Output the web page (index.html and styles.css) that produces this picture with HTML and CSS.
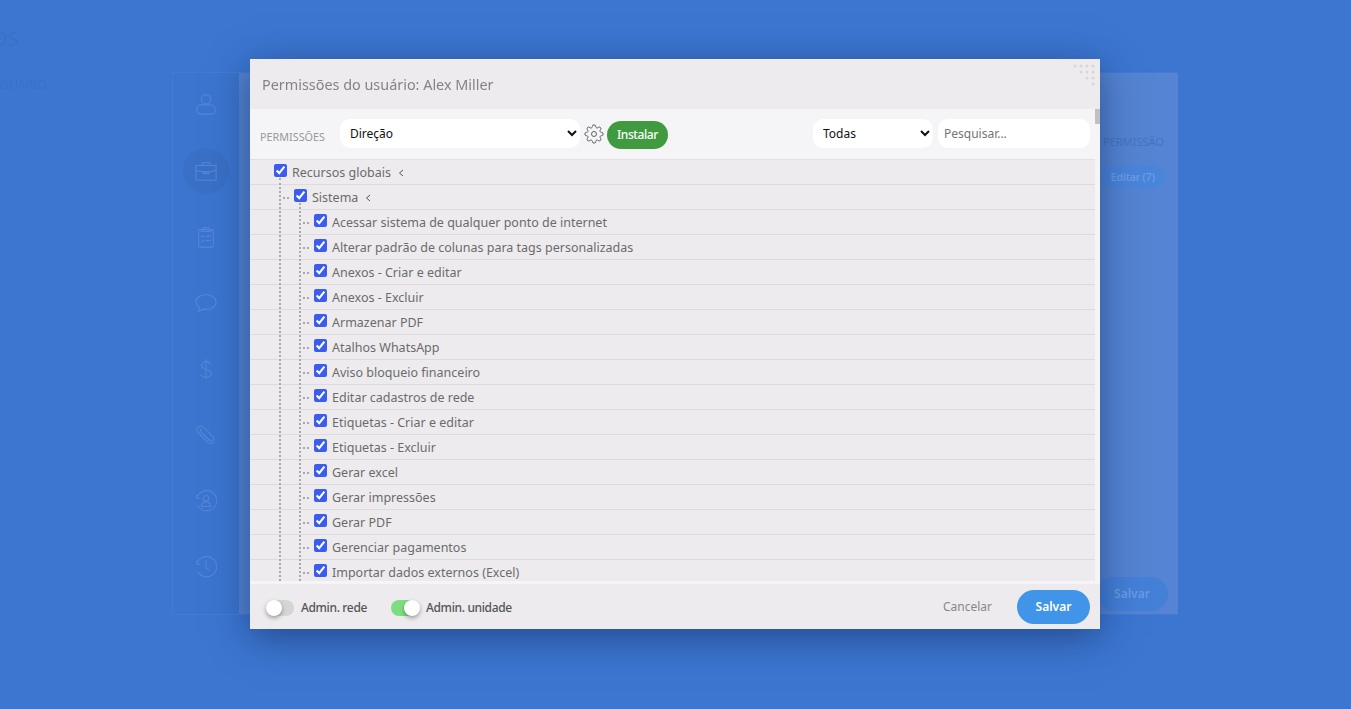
FILE: index.html
```html
<!DOCTYPE html>
<html lang="pt-BR">
<head>
<meta charset="utf-8">
<title>Permissões do usuário</title>
<link rel="stylesheet" href="styles.css">
</head>
<body>
<div class="page">
  <div class="ghost-heading">OS</div>
  <div class="ghost-sub">USUÁRIO</div>
  <main class="card">
    <nav class="side">
      <svg class="nav-icon" viewBox="0 0 24 24"><circle cx="12" cy="7" r="5"/><path d="M6 23a4 4 0 0 1-4-4v-1a5 5 0 0 1 5-5h10a5 5 0 0 1 5 5v1a4 4 0 0 1-4 4z"/></svg>
      <span class="nav-active"><svg class="nav-icon" viewBox="0 0 24 24"><rect x="1" y="6" width="22" height="16"/><path d="M8 6V3h8v3M1 11c5 3 17 3 22 0M9 13h6v2H9z"/></svg></span>
      <svg class="nav-icon" viewBox="0 0 24 24"><rect x="4" y="4" width="16" height="19" rx="1"/><path d="M9 4V2h6v2h2v2H7V4zM7 11l1 1 2-2M12 11h5M7 16l1 1 2-2M12 16h5"/></svg>
      <svg class="nav-icon" viewBox="0 0 24 24"><path d="M12 3c6 0 11 3 11 8s-5 8-11 8c-1 0-2 0-3-.3L4 21l1-4c-2-1.500-4-3.500-4-6 0-5 5-8 11-8z"/></svg>
      <svg class="nav-icon" viewBox="0 0 24 24"><path d="M17 7c-1-2-3-3-5-3-3 0-5 2-5 4 0 6 11 3 11 9 0 2-3 4-6 4s-5-1-6-3M12 1v22"/></svg>
      <svg class="nav-icon" viewBox="0 0 24 24"><path d="M21 20c-2 2-5 2-7 0L3 9C1 7 2 4 4 3c2-1 4-1 6 1l10 10c1 2 1 3 0 4s-3 1-4 0L6 8c-1-1 0-3 2-2"/></svg>
      <svg class="nav-icon" viewBox="0 0 24 24"><path d="M2 9a11 11 0 1 1 1 8M2 5v4h4"/><circle cx="12" cy="9" r="3"/><path d="M7 18c0-3 2-5 5-5s5 2 5 5z"/></svg>
      <svg class="nav-icon" viewBox="0 0 24 24"><path d="M2 9a11 11 0 1 1 1 8M2 5v4h4M12 5v8l4 3"/></svg>
    </nav>
    <section class="content">
      <div class="content-top"></div>
      <div class="content-head">PERMISSÃO</div>
      <div class="content-row"><span class="ghost-pill">Editar (7)</span></div>
      <div class="content-foot"><span class="ghost-save">Salvar</span></div>
    </section>
  </main>
</div>

<div class="overlay">
  <div class="modal">
    <header class="modal-head">
      <h1 class="modal-title">Permissões do usuário: Alex Miller</h1>
      <svg class="grip" viewBox="0 0 22 22"><g><circle cx="2" cy="2" r="1.500"/><circle cx="8" cy="2" r="1.500"/><circle cx="14" cy="2" r="1.500"/><circle cx="20" cy="2" r="1.500"/><circle cx="8" cy="8" r="1.500"/><circle cx="14" cy="8" r="1.500"/><circle cx="20" cy="8" r="1.500"/><circle cx="14" cy="14" r="1.500"/><circle cx="20" cy="14" r="1.500"/><circle cx="20" cy="20" r="1.500"/></g></svg>
    </header>
    <div class="modal-body">
      <div class="pane">
        <div class="toolbar">
          <span class="tool-label">PERMISSÕES</span>
          <select class="field field-role"><option>Direção</option></select>
          <svg class="gear" viewBox="0 0 24 24"><circle cx="12" cy="12" r="3"/><path d="M19.4 15a1.650 1.650 0 0 0 .33 1.820l.06.06a2 2 0 0 1 0 2.830 2 2 0 0 1-2.830 0l-.06-.06a1.650 1.650 0 0 0-1.820-.33 1.650 1.650 0 0 0-1 1.510V21a2 2 0 0 1-2 2 2 2 0 0 1-2-2v-.09A1.650 1.650 0 0 0 9 19.400a1.650 1.650 0 0 0-1.820.33l-.06.06a2 2 0 0 1-2.830 0 2 2 0 0 1 0-2.830l.06-.06a1.650 1.650 0 0 0 .33-1.820 1.650 1.650 0 0 0-1.510-1H3a2 2 0 0 1-2-2 2 2 0 0 1 2-2h.09A1.650 1.650 0 0 0 4.600 9a1.650 1.650 0 0 0-.33-1.820l-.06-.06a2 2 0 0 1 0-2.830 2 2 0 0 1 2.830 0l.06.06a1.650 1.650 0 0 0 1.820.33H9a1.650 1.650 0 0 0 1-1.510V3a2 2 0 0 1 2-2 2 2 0 0 1 2 2v.09a1.650 1.650 0 0 0 1 1.510 1.650 1.650 0 0 0 1.820-.33l.06-.06a2 2 0 0 1 2.830 0 2 2 0 0 1 0 2.830l-.06.06a1.650 1.650 0 0 0-.33 1.820V9a1.650 1.650 0 0 0 1.510 1H21a2 2 0 0 1 2 2 2 2 0 0 1-2 2h-.09a1.650 1.650 0 0 0-1.510 1z"/></svg>
          <button class="install">Instalar</button>
          <span class="tool-spacer"></span>
          <select class="field field-filter"><option>Todas</option></select>
          <input class="field field-search" placeholder="Pesquisar...">
        </div>
        <div class="tree-wrap">
          <ul class="tree">
            <li>
              <label class="row"><input type="checkbox" checked><span>Recursos globais</span><svg class="chev" viewBox="0 0 6 8"><path d="M5 1 1.500 4 5 7"/></svg></label>
              <ul class="branch">
                <li>
                  <label class="row"><i class="tick"></i><input type="checkbox" checked><span>Sistema</span><svg class="chev" viewBox="0 0 6 8"><path d="M5 1 1.500 4 5 7"/></svg></label>
                  <ul class="branch branch-inner">
                    <li><label class="row"><i class="tick"></i><input type="checkbox" checked><span>Acessar sistema de qualquer ponto de internet</span></label></li>
                    <li><label class="row"><i class="tick"></i><input type="checkbox" checked><span>Alterar padrão de colunas para tags personalizadas</span></label></li>
                    <li><label class="row"><i class="tick"></i><input type="checkbox" checked><span>Anexos - Criar e editar</span></label></li>
                    <li><label class="row"><i class="tick"></i><input type="checkbox" checked><span>Anexos - Excluir</span></label></li>
                    <li><label class="row"><i class="tick"></i><input type="checkbox" checked><span>Armazenar PDF</span></label></li>
                    <li><label class="row"><i class="tick"></i><input type="checkbox" checked><span>Atalhos WhatsApp</span></label></li>
                    <li><label class="row"><i class="tick"></i><input type="checkbox" checked><span>Aviso bloqueio financeiro</span></label></li>
                    <li><label class="row"><i class="tick"></i><input type="checkbox" checked><span>Editar cadastros de rede</span></label></li>
                    <li><label class="row"><i class="tick"></i><input type="checkbox" checked><span>Etiquetas - Criar e editar</span></label></li>
                    <li><label class="row"><i class="tick"></i><input type="checkbox" checked><span>Etiquetas - Excluir</span></label></li>
                    <li><label class="row"><i class="tick"></i><input type="checkbox" checked><span>Gerar excel</span></label></li>
                    <li><label class="row"><i class="tick"></i><input type="checkbox" checked><span>Gerar impressões</span></label></li>
                    <li><label class="row"><i class="tick"></i><input type="checkbox" checked><span>Gerar PDF</span></label></li>
                    <li><label class="row"><i class="tick"></i><input type="checkbox" checked><span>Gerenciar pagamentos</span></label></li>
                    <li><label class="row"><i class="tick"></i><input type="checkbox" checked><span>Importar dados externos (Excel)</span></label></li>
                  </ul>
                </li>
              </ul>
            </li>
          </ul>
        </div>
      </div>
      <div class="scrollbar"><div class="thumb"></div></div>
    </div>
    <footer class="modal-foot">
      <span class="toggle"><i class="knob"></i></span>
      <span class="toggle-label label-rede">Admin. rede</span>
      <span class="toggle on"><i class="knob"></i></span>
      <span class="toggle-label">Admin. unidade</span>
      <span class="tool-spacer"></span>
      <button class="cancel">Cancelar</button>
      <button class="save">Salvar</button>
    </footer>
  </div>
</div>
</body>
</html>
```
FILE: styles.css
```css
* { box-sizing: border-box; }
html, body { margin: 0; height: 100%; }
body {
  background: #3c76d1;
  font-family: "Noto Sans", "Open Sans", sans-serif;
  overflow: hidden;
  color: #666;
}
ul { list-style: none; margin: 0; padding: 0; }

/* page behind the modal */
.page { position: relative; height: 709px; padding-top: 72px; filter: blur(.6px); }
.ghost-heading { position: absolute; left: -8px; top: 25px; font-size: 20px; color: #3a70c8; }
.ghost-sub { position: absolute; left: -6px; top: 76px; font-size: 12px; color: #3a70c8; }
.card {
  display: grid;
  grid-template-columns: 66px 1fr;
  grid-template-rows: minmax(0, 1fr);
  width: 1006px;
  height: 543px;
  margin-left: 172px;
  border: 1px solid #437bd4;
  border-right: 0;
}
.side {
  display: flex;
  flex-direction: column;
  align-items: center;
  padding-top: 19px;
  background: #3b75cf;
}
.nav-icon {
  width: 22px;
  height: 24px;
  flex: none;
  margin-bottom: 42px;
  fill: none;
  stroke: #5586d7;
  stroke-width: 1.200;
}
.nav-icon:last-child { margin-bottom: 0; }
.nav-active {
  display: flex;
  align-items: center;
  justify-content: center;
  flex: none;
  width: 46px;
  height: 46px;
  margin: -10px 0 31px;
  border-radius: 50%;
  background: #3a70c6;
}
.nav-active .nav-icon { margin: 0; }
.content { display: flex; flex-direction: column; min-height: 0; background: #5484d3; }
.content-top { height: 59px; }
.content-head {
  padding-left: 864px;
  margin-top: 2px;
  font-size: 11px;
  line-height: 16px;
  color: #4474c4;
  white-space: nowrap;
}
.content-row { padding: 14px 0 0 861px; }
.ghost-pill {
  display: inline-block;
  width: 65px;
  height: 22px;
  border-radius: 11px;
  background: #4a85dc;
  color: #6b9be3;
  font-size: 11px;
  font-weight: 600;
  letter-spacing: -.4px;
  line-height: 22px;
  text-align: center;
}
.content-foot { margin-top: auto; padding: 0 10px 3px 0; display: flex; justify-content: flex-end; }
.ghost-save {
  width: 72px;
  height: 34px;
  border-radius: 17px;
  background: #4480d8;
  color: #6a9be3;
  font-size: 12px;
  font-weight: 600;
  line-height: 34px;
  text-align: center;
}

/* modal */
.overlay {
  position: absolute;
  inset: 0;
  display: flex;
  justify-content: center;
  padding: 59px 1px 0 0;
}
.modal {
  display: flex;
  flex-direction: column;
  width: 850px;
  height: 570px;
  background: #edebee;
  box-shadow: 0 8px 36px rgba(10, 30, 70, .5);
}
.modal-head {
  position: relative;
  display: flex;
  align-items: center;
  height: 50px;
  padding-left: 12px;
  flex: none;
}
.modal-title { margin: 0; font-size: 14.400px; font-weight: 400; color: #838387; }
.grip { position: absolute; top: 5px; right: 5px; width: 22px; height: 22px; fill: #d6d6da; }
.modal-body { display: flex; height: 475px; flex: none; background: #f5f5f7; }
.pane { display: flex; flex-direction: column; flex: 1; min-width: 0; }
.toolbar {
  display: flex;
  align-items: center;
  height: 51px;
  flex: none;
  padding: 0 5px 2px 10px;
  border-bottom: 1px solid #e1e1e4;
  background: #f5f5f7;
}
.tool-label { width: 80px; margin-top: 7px; font-size: 10.800px; color: #98989b; white-space: nowrap; }
.tool-spacer { flex: 1; }
.field {
  height: 29px;
  border: 0;
  border-radius: 10px;
  background: #fff;
  font-family: inherit;
  font-size: 12px;
  color: #111;
  outline: none;
}
.field-role { width: 240px; padding-left: 6px; }
.field-filter { width: 120px; padding-left: 6px; }
.field-search { width: 152px; margin-left: 5px; padding: 0 6px; color: #555; }
.field-search::placeholder { color: #757575; }
.gear { width: 20px; height: 20px; margin: 2px 3px 0 4px; fill: none; stroke: #444; stroke-width: 1; }
.install {
  width: 61px;
  height: 28px;
  margin-top: 3px;
  padding: 0;
  border: 0;
  border-radius: 14px;
  background: #409b40;
  color: #fff;
  font-family: inherit;
  font-size: 12px;
  font-weight: 500;
  letter-spacing: -.4px;
}
.tree-wrap { flex: 1; min-height: 0; overflow: hidden; background: #edebee; border-bottom: 3px solid #f5f5f7; }
.tree {
  padding-left: 24px;
  background: repeating-linear-gradient(to bottom, transparent 0 24px, #dcdcdf 24px 25px);
  min-height: 100%;
}
.row {
  display: flex;
  align-items: flex-start;
  height: 25px;
  font-size: 12.500px;
  line-height: 25px;
  color: #6b6b6b;
  white-space: nowrap;
}
.row input {
  width: 13px;
  height: 13px;
  flex: none;
  margin: 4px 5px 0 0;
  accent-color: #3a5cf0;
}
.tick {
  flex: none;
  width: 6px;
  height: 0;
  margin: 12px 5px 0 2px;
  border-top: 2px dotted #a9a9ad;
}
.chev { width: 6px; height: 8px; margin: 9px 0 0 7px; fill: none; stroke: #555; stroke-width: 1; }
.branch {
  margin: -7px 0 0 5px;
  padding-top: 7px;
  border-left: 2px dotted #a9a9ad;
}
.branch-inner { margin-left: 18px; }
.scrollbar { width: 5px; flex: none; background: #f5f5f7; }
.thumb { height: 15px; background: #c0c0c2; }
.modal-foot {
  display: flex;
  align-items: center;
  flex: 1;
  padding: 0 10px 0 16px;
  background: #edebee;
}
.toggle {
  position: relative;
  flex: none;
  width: 28px;
  height: 16px;
  margin-top: 2px;
  border-radius: 8px;
  background: #d5d5d5;
}
.toggle.on { background: #7edd7e; }
.knob {
  position: absolute;
  left: 0;
  top: 0;
  width: 16px;
  height: 16px;
  border-radius: 50%;
  background: #fff;
  box-shadow: 0 2px 4px rgba(0, 0, 0, .35);
}
.on .knob { left: 13px; }
.toggle-label { margin: 1px 0 0 7px; font-size: 12px; font-weight: 500; letter-spacing: -.35px; color: #555; white-space: nowrap; }
.label-rede { margin-right: 24px; }
.cancel {
  margin-right: 25px;
  padding: 0;
  border: 0;
  background: none;
  color: #888;
  font-family: inherit;
  font-size: 12px;
}
.save {
  width: 73px;
  height: 34px;
  padding: 0;
  border: 0;
  border-radius: 17px;
  background: #4095e8;
  color: #fff;
  font-family: inherit;
  font-size: 12px;
  font-weight: 600;
}
```
